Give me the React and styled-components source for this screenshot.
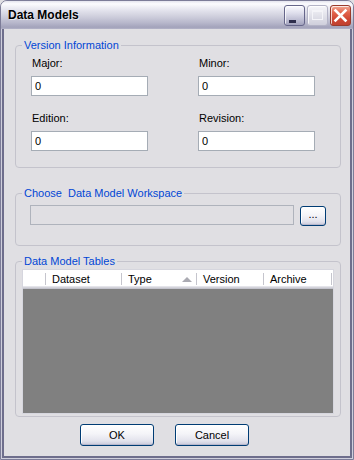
import * as React from "react";
import styled, { createGlobalStyle } from "styled-components";

const GlobalStyle = createGlobalStyle`
  html, body {
    margin: 0;
    padding: 0;
    background: #e0dfe3;
  }
  * {
    box-sizing: border-box;
  }
`;

const fields = [
  { label: "Major:", value: "0" },
  { label: "Minor:", value: "0" },
  { label: "Edition:", value: "0" },
  { label: "Revision:", value: "0" },
];

const columns = [
  { title: "", width: 23 },
  { title: "Dataset", width: 76 },
  { title: "Type", width: 75, sorted: true },
  { title: "Version", width: 67 },
  { title: "Archive", width: 68 },
];

function MinimizeGlyph() {
  return (
    <svg width="21" height="21" viewBox="0 0 21 21">
      <rect x="5" y="15" width="7" height="3" fill="#2e2e4c" />
    </svg>
  );
}

function MaximizeGlyph() {
  return (
    <svg width="21" height="21" viewBox="0 0 21 21">
      <rect x="5.5" y="5.5" width="10" height="9" fill="none" stroke="#f4f4f8" strokeWidth="1" />
      <rect x="5" y="5" width="11" height="2" fill="#f4f4f8" />
    </svg>
  );
}

function CloseGlyph() {
  return (
    <svg width="21" height="21" viewBox="0 0 21 21">
      <path d="M5.5 5.5 L15.5 15.5 M15.5 5.5 L5.5 15.5" stroke="#ffffff" strokeWidth="2.6" strokeLinecap="square" fill="none" />
    </svg>
  );
}

function App() {
  return (
    <>
      <GlobalStyle />
      <Window>
        <TitleBar>
          <Title>Data Models</Title>
          <Controls>
            <CaptionButton kind="min"><MinimizeGlyph /></CaptionButton>
            <CaptionButton kind="max"><MaximizeGlyph /></CaptionButton>
            <CaptionButton kind="close"><CloseGlyph /></CaptionButton>
          </Controls>
        </TitleBar>
        <Body>
          <Group>
            <Legend>Version Information</Legend>
            <FieldGrid>
              {fields.map((f) => (
                <Field key={f.label}>
                  <FieldLabel>{f.label}</FieldLabel>
                  <TextBox defaultValue={f.value} />
                </Field>
              ))}
            </FieldGrid>
          </Group>

          <Group $top={18}>
            <Legend>Choose&nbsp; Data Model Workspace</Legend>
            <PathRow>
              <PathBox disabled />
              <PushButton $small>...</PushButton>
            </PathRow>
          </Group>

          <Group $top={8} $grow>
            <Legend>Data Model Tables</Legend>
            <ListWrap>
              <ListView>
                <Header>
                  {columns.map((c, i) => (
                    <HeaderCell key={i} style={{ width: c.width }}>
                      <span>{c.title}</span>
                      {c.sorted && <SortArrow />}
                    </HeaderCell>
                  ))}
                </Header>
                <ListBody />
              </ListView>
            </ListWrap>
          </Group>

          <ButtonRow>
            <PushButton>OK</PushButton>
            <PushButton>Cancel</PushButton>
          </ButtonRow>
        </Body>
      </Window>
    </>
  );
}

const Window = styled.div`
  width: 354px;
  height: 460px;
  display: flex;
  flex-direction: column;
  border: 1px solid #7c7c98;
  border-radius: 7px 7px 0 0;
  overflow: hidden;
  background: #e0dfe3;
  font-family: "Liberation Sans", Arial, sans-serif;
  font-size: 11px;
  color: #000;
`;

const TitleBar = styled.div`
  height: 28px;
  flex: none;
  display: flex;
  align-items: center;
  padding: 0 2px 0 7px;
  background: linear-gradient(
    to bottom,
    #e4e4ee 0%,
    #fbfbfe 10%,
    #e6e6ef 30%,
    #cfcfdd 55%,
    #b7b7cb 78%,
    #a3a3bb 94%,
    #b4b4c8 100%
  );
`;

const Title = styled.div`
  font-family: "Liberation Sans", Arial, sans-serif;
  font-weight: bold;
  font-size: 12px;
  color: #000;
  text-shadow: 1px 1px 0 rgba(255, 255, 255, 0.6);
  padding-bottom: 1px;
`;

const Controls = styled.div`
  margin-left: auto;
  display: flex;
  gap: 2px;
`;

const CaptionButton = styled.div`
  width: 21px;
  height: 21px;
  border-radius: 3px;
  display: flex;
  overflow: hidden;
  border: 1px solid
    ${(p) => (p.kind === "close" ? "#9a3a2c" : p.kind === "max" ? "#b3b3c6" : "#66668a")};
  background: ${(p) =>
    p.kind === "close"
      ? "linear-gradient(to bottom, #f2a996 0%, #e2644c 35%, #cf4633 70%, #c0402f 100%)"
      : p.kind === "max"
      ? "linear-gradient(to bottom, #f6f6fa 0%, #e2e2ea 50%, #cfcfdc 100%)"
      : "linear-gradient(to bottom, #fbfbff 0%, #dcdcea 40%, #b6b6cd 80%, #a2a2bd 100%)"};
  box-shadow: inset 1px 1px 0 rgba(255, 255, 255, 0.75);
  svg {
    margin: -1px;
  }
`;

const Body = styled.div`
  flex: 1;
  display: flex;
  flex-direction: column;
  padding: 9px 12px 13px 14px;
  box-shadow: inset 1px 0 #cfcfdc, inset -1px 0 #cfcfdc, inset 0 -1px #cfcfdc,
    inset 3px 0 #6e6e8c, inset -3px 0 #6e6e8c, inset 0 -3px #6e6e8c;
`;

const Group = styled.fieldset`
  margin: ${(p) => p.$top || 0}px 0 0 0;
  padding: 0;
  min-width: 0;
  border: 1px solid #c4c3cc;
  border-radius: 4px;
  display: flex;
  flex-direction: column;
  ${(p) => (p.$grow ? "flex: 1;" : "")}
`;

const Legend = styled.legend`
  margin-left: 6px;
  padding: 0 2px;
  font-size: 11px;
  line-height: 14px;
  color: #0046d5;
  white-space: pre;
`;

const FieldGrid = styled.div`
  display: grid;
  grid-template-columns: 117px 117px;
  column-gap: 50px;
  row-gap: 16px;
  padding: 5px 0 16px 15px;
`;

const Field = styled.div`
  display: flex;
  flex-direction: column;
`;

const FieldLabel = styled.label`
  padding-left: 1px;
  line-height: 13px;
  margin-bottom: 6px;
`;

const TextBox = styled.input`
  width: 117px;
  height: 20px;
  border: 1px solid #a5acb5;
  background: #fff;
  padding: 0 3px;
  margin: 0;
  font-family: "Liberation Sans", Arial, sans-serif;
  font-size: 11px;
  color: #000;
  outline: none;
`;

const PathRow = styled.div`
  display: flex;
  align-items: flex-start;
  gap: 6px;
  padding: 5px 0 19px 14px;
`;

const PathBox = styled.input`
  width: 264px;
  height: 20px;
  margin: 0;
  border: 1px solid #afb3bc;
  background: #e0dfe3;
`;

const PushButton = styled.button`
  width: ${(p) => (p.$small ? 26 : 74)}px;
  height: ${(p) => (p.$small ? 20 : 22)}px;
  margin: ${(p) => (p.$small ? "1px 0 0 0" : 0)};
  padding: 0 0 ${(p) => (p.$small ? 3 : 0)}px;
  border: 1px solid #003c74;
  border-radius: 3px;
  background: linear-gradient(to bottom, #ffffff 0%, #f4f4f8 45%, #e2e2ec 80%, #c9c9da 100%);
  box-shadow: inset 0 -1px 0 #b7b7cc, inset 1px 1px 0 #ffffff;
  font-family: "Liberation Sans", Arial, sans-serif;
  font-size: 11px;
  color: #000;
  line-height: 1;
`;

const ListWrap = styled.div`
  flex: 1;
  display: flex;
  padding: 1px 6px 2px 6px;
`;

const ListView = styled.div`
  flex: 1;
  display: flex;
  flex-direction: column;
  border: 1px solid #d6d6de;
`;

const Header = styled.div`
  height: 19px;
  display: flex;
  background: #fff;
  box-shadow: inset 0 -1px #c3c3cc, inset 0 -2px #d3d3da, inset 0 -3px #e4e4ea;
`;

const HeaderCell = styled.div`
  position: relative;
  display: flex;
  align-items: center;
  padding: 0 5px 1px 6px;
  &::after {
    content: "";
    position: absolute;
    right: 0;
    top: 3px;
    bottom: 4px;
    width: 1px;
    background: #c5c5cd;
  }
`;

const SortArrow = styled.i`
  margin-left: auto;
  width: 0;
  height: 0;
  border-left: 5px solid transparent;
  border-right: 5px solid transparent;
  border-bottom: 5px solid #aaaab2;
`;

const ListBody = styled.div`
  flex: 1;
  background: #808080;
`;

const ButtonRow = styled.div`
  display: flex;
  gap: 21px;
  margin-top: 7px;
  padding-left: 65px;
`;

export default App;
